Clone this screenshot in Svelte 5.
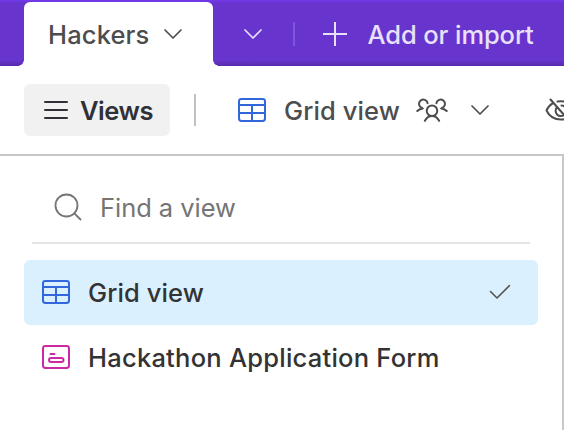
<script>
  const views = [
    { name: 'Grid view', kind: 'grid', active: true },
    { name: 'Hackathon Application Form', kind: 'form', active: false }
  ];
</script>

{#snippet chevron()}
  <svg class="chevron" width="20" height="12" viewBox="0 0 20 12"><path d="M2 2l8 8 8-8" /></svg>
{/snippet}

{#snippet gridIcon()}
  <svg class="grid-icon" width="28" height="24" viewBox="0 0 28 24">
    <rect x="1" y="1" width="26" height="22" rx="2.4" /><path d="M1 7h26M1 15h26M14 7v16" />
  </svg>
{/snippet}

<div class="app">
  <header>
    <div class="tab">
      <span class="label hackers">Hackers</span>
      {@render chevron()}
    </div>
    <div class="more">{@render chevron()}</div>
    <i class="split"></i>
    <svg class="plus" width="24" height="24" viewBox="0 0 24 24"><path d="M12 0v24M0 12h24" /></svg>
    <span class="label add">Add or import</span>
  </header>

  <div class="toolbar">
    <div class="views">
      <svg width="24" height="20" viewBox="0 0 24 20"><path d="M1 2h22M1 10h22M1 18h22" /></svg>
      <span class="label">Views</span>
    </div>
    <i class="divider"></i>
    {@render gridIcon()}
    <span class="label current">Grid view</span>
    <svg class="people" width="32" height="24" viewBox="0 0 32 24">
      <circle cx="16" cy="12.7" r="5.3" />
      <path d="M8.9 22.8c1.6-3 4.2-4.800 7.100-4.800s5.500 1.800 7.100 4.800" />
      <path d="M11.600 5.200A4.300 4.300 0 1 0 5.800 9.900L6.800 10.500Q3.600 10.700 1.300 13" />
      <path d="M20.400 5.200A4.300 4.300 0 1 1 26.200 9.900L25.200 10.500Q28.400 10.700 30.700 13" />
    </svg>
    <div class="view-arrow">{@render chevron()}</div>
    <svg class="hidden-icon" width="32" height="24" viewBox="0 0 32 24">
      <path d="M5.500 1.500L23.500 22M8 5.200C4.500 7.300 2.500 10 1.500 12.500c3 6.200 8 9 14.500 9 2 0 3.800-.3 5.500-1M12.500 3.600c9-1.200 15 2.400 18 8.900-1.200 2.600-3 4.800-5.300 6.300M12.200 9a5.200 5.200 0 0 0 7.300 7.600M16.500 7.400a5.200 5.200 0 0 1 4.700 4.700" />
    </svg>
  </div>

  <aside>
    <div class="search">
      <svg width="28" height="28" viewBox="0 0 28 28"><circle cx="12.5" cy="12.5" r="11" /><path d="M20.3 20.3L26.5 26.5" /></svg>
      <span class="label">Find a view</span>
    </div>
    <ul>
      {#each views as view}
        <li class:active={view.active}>
          {#if view.kind === 'grid'}
            {@render gridIcon()}
          {:else}
            <svg class="form-icon" width="28" height="24" viewBox="0 0 28 24">
              <rect x="1" y="1" width="26" height="22" rx="2.4" /><path d="M8.5 9h4" /><rect x="7" y="13" width="14.5" height="4" rx="2" />
            </svg>
          {/if}
          <span class="label {view.kind}">{view.name}</span>
          {#if view.active}
            <svg class="check" width="22" height="16" viewBox="0 0 22 16"><path d="M1.5 7.500l6.500 6.500L20.500 1.500" /></svg>
          {/if}
        </li>
      {/each}
    </ul>
  </aside>
</div>

<style>
  .app {
    width: 564px;
    height: 430px;
    display: flex;
    flex-direction: column;
    overflow: hidden;
    background: #fff;
    color: #333;
    font: 500 25.5px/32px Inter, "Liberation Sans", sans-serif;
  }
  svg {
    display: block;
    flex: none;
    fill: none;
    stroke: currentColor;
    stroke-width: 2;
    stroke-linecap: round;
    stroke-linejoin: round;
  }
  .label { white-space: nowrap; flex: none; }
  .chevron { stroke-width: 1.7; }
  header {
    box-sizing: border-box;
    height: 66px;
    flex: none;
    display: flex;
    align-items: center;
    padding-left: 24px;
    border-top: 2px solid #7139e6;
    background: linear-gradient(#6735cd calc(100% - 6px), #572bad);
    color: #e9e1fa;
  }
  .tab {
    position: relative;
    box-sizing: border-box;
    width: 189px;
    height: 64px;
    flex: none;
    display: flex;
    align-items: center;
    padding-left: 24px;
    border-radius: 6px 6px 0 0;
    background: #fff;
    color: #4d4d4d;
  }
  .tab::before, .tab::after {
    content: "";
    position: absolute;
    bottom: 0;
    width: 6px;
    height: 6px;
  }
  .tab::before { left: -6px; background: radial-gradient(circle at 0 0, transparent 5.5px, #fff 6px); }
  .tab::after { right: -6px; background: radial-gradient(circle at 100% 0, transparent 5.5px, #fff 6px); }
  .hackers { width: 115px; letter-spacing: 0.15px; padding-top: 1px; }
  .more { margin-left: 30px; }
  .split { width: 2px; height: 24px; flex: none; margin-left: 30px; background: #7f54d9; }
  .plus { margin-left: 28px; stroke-linecap: butt; }
  .add { margin-left: 20.5px; letter-spacing: -0.1px; padding-top: 1px; }
  .toolbar {
    box-sizing: border-box;
    height: 90px;
    flex: none;
    display: flex;
    align-items: center;
    padding-left: 24px;
    border-bottom: 2px solid #c8c8c8;
    color: #4d4d4d;
  }
  .views {
    box-sizing: border-box;
    width: 146px;
    height: 52px;
    flex: none;
    display: flex;
    align-items: center;
    gap: 12px;
    padding-left: 20px;
    border-radius: 6px;
    background: #f1f1f1;
    color: #303136;
    font-weight: 600;
    letter-spacing: -0.45px;
  }
  .views .label { padding-top: 1px; }
  .divider { width: 2px; height: 32px; flex: none; margin: 0 42px 0 24px; background: #c1c1c1; }
  .grid-icon { color: #3267dc; }
  .current { width: 132px; margin-left: 18px; padding-top: 1px; letter-spacing: 0.1px; }
  .view-arrow { margin-left: 22px; }
  .hidden-icon { margin-left: 55px; }
  aside {
    box-sizing: border-box;
    flex: 1;
    border-right: 2px solid #c8c8c8;
    padding: 0 24px;
  }
  .search {
    box-sizing: border-box;
    width: 498px;
    height: 88px;
    margin-left: 8px;
    display: flex;
    align-items: center;
    gap: 18px;
    padding: 16px 0 0 22px;
    border-bottom: 2px solid #e4e4e4;
    color: #757575;
    font-weight: 400;
    letter-spacing: -0.05px;
  }
  .search svg { stroke-width: 1.8; }
  .search .label { padding-top: 2px; }
  ul { list-style: none; margin: 16px 0 0; padding: 0; }
  li {
    box-sizing: border-box;
    width: 514px;
    height: 65px;
    display: flex;
    align-items: center;
    padding: 0 27px 1px 18px;
    border-radius: 6px;
  }
  li.active { background: #daf0fe; }
  li .label { margin-left: 18px; padding-top: 2px; letter-spacing: 0.1px; }
  li .form { letter-spacing: 0.24px; }
  .form-icon { color: #cc2aa2; }
  .check { margin-left: auto; color: #555; stroke-width: 1.6; }
</style>
